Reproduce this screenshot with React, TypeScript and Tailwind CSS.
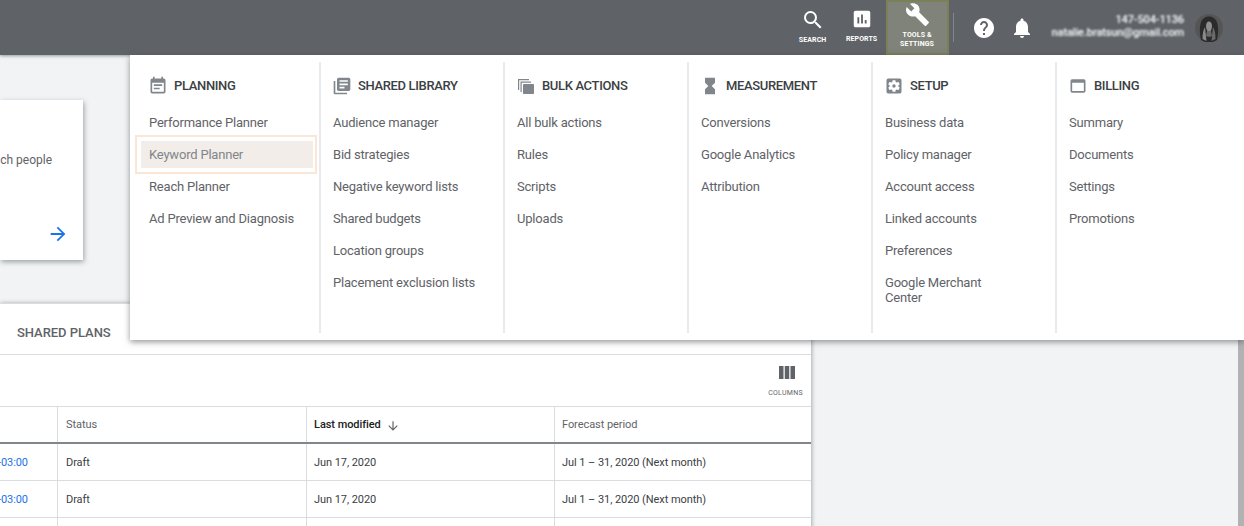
import React from "react";
import {
  MdSearch,
  MdAssessment,
  MdBuild,
  MdHelp,
  MdNotifications,
  MdEventNote,
  MdLibraryBooks,
  MdHourglassFull,
  MdSettingsApplications,
  MdWebAsset,
  MdArrowForward,
  MdArrowDownward,
} from "react-icons/md";

function BulkIcon() {
  return (
    <svg viewBox="0 0 18 18" className="w-[18px] h-[18px]" fill="#80868b">
      <path d="M1 2h11v1.2H2.2V13H1V2z" />
      <path d="M3.5 4.5H14v1.2H4.7V15H3.5V4.5z" />
      <rect x="6" y="7" width="11" height="10" rx="0.8" />
    </svg>
  );
}

const columns = [
  {
    title: "PLANNING",
    icon: <MdEventNote size={20} color="#80868b" />,
    items: ["Performance Planner", "Keyword Planner", "Reach Planner", "Ad Preview and Diagnosis"],
    w: "w-[191px]",
    pl: "pl-[19px]",
  },
  {
    title: "SHARED LIBRARY",
    icon: <MdLibraryBooks size={20} color="#80868b" />,
    items: ["Audience manager", "Bid strategies", "Negative keyword lists", "Shared budgets", "Location groups", "Placement exclusion lists"],
    w: "w-[184px]",
    pl: "pl-[12px]",
  },
  {
    title: "BULK ACTIONS",
    icon: <BulkIcon />,
    items: ["All bulk actions", "Rules", "Scripts", "Uploads"],
    w: "w-[184px]",
    pl: "pl-[12px]",
  },
  {
    title: "MEASUREMENT",
    icon: <MdHourglassFull size={20} color="#80868b" />,
    items: ["Conversions", "Google Analytics", "Attribution"],
    w: "w-[184px]",
    pl: "pl-[12px]",
  },
  {
    title: "SETUP",
    icon: <MdSettingsApplications size={20} color="#80868b" />,
    items: ["Business data", "Policy manager", "Account access", "Linked accounts", "Preferences", "Google Merchant Center"],
    w: "w-[184px]",
    pl: "pl-[12px]",
  },
  {
    title: "BILLING",
    icon: <MdWebAsset size={20} color="#80868b" />,
    items: ["Summary", "Documents", "Settings", "Promotions"],
    w: "flex-1",
    pl: "pl-[12px]",
  },
];

function Menu() {
  return (
    <div className="absolute left-[130px] right-0 top-[55px] h-[285px] bg-white shadow-[0_2px_6px_rgba(60,64,67,0.55)] flex pt-[7px] pb-[7px] text-[13px] leading-[16px] tracking-[-0.2px]">
      {columns.map((c, i) => (
        <div key={c.title} className={`${c.w} ${c.pl} ${i < 5 ? "border-r-2 border-[#e8eaed]" : ""} shrink-0`}>
          <div className="flex items-center gap-[6px] h-[32px] mt-[8px] -ml-[1px]">
            <span className="w-[20px] h-[20px] flex items-center justify-center">{c.icon}</span>
            <span className="font-medium text-[#3c4043] tracking-[-0.35px]">{c.title}</span>
          </div>
          <div className="mt-[5px]">
            {c.items.map((it) =>
              it === "Keyword Planner" ? (
                <div key={it} className="relative h-[32px]">
                  <div className="absolute left-[-14px] right-[2px] top-[-4px] h-[39px] border-2 border-[#fbe6d5] bg-white p-[4px] pr-[2px]">
                    <div className="h-full bg-[#f2ede9] pl-[8px] flex items-center text-[#80868b]">{it}</div>
                  </div>
                </div>
              ) : (
                <div key={it} className={`${it.startsWith("Google Merchant") ? "w-[110px] pt-[8px] leading-[15px]" : "h-[32px] flex items-center"} text-[#5f6368]`}>
                  {it}
                </div>
              )
            )}
          </div>
        </div>
      ))}
    </div>
  );
}

function NavButton({ icon, label, w, pt, mt }: { icon: React.ReactNode; label: string; w: string; pt: string; mt: string }) {
  return (
    <div className={`${w} ${pt} self-start flex flex-col items-center text-white`}>
      {icon}
      <span className={`text-[7px] leading-[9px] font-bold ${mt} tracking-[0.1px]`}>{label}</span>
    </div>
  );
}

function Header() {
  return (
    <div className="h-[55px] shrink-0 bg-[#5f6368] flex items-center justify-end pr-[21px] shadow-[0_1px_3px_rgba(60,64,67,0.5)] relative">
      <NavButton w="w-[42px]" pt="pt-[8px]" mt="mt-[4px]" label="SEARCH" icon={<MdSearch size={24} />} />
      <div className="w-[10px]" />
      <NavButton w="w-[36px]" pt="pt-[8px]" mt="mt-[5px]" label="REPORTS" icon={<MdAssessment size={22} />} />
      <div className="w-[6px]" />
      <div className="w-[63px] h-[55px] bg-[#7f8379] border-2 border-[#7b8058] flex flex-col items-center text-white overflow-hidden">
        <MdBuild size={25} />
        <span className="text-[7px] leading-[9px] font-bold mt-[4px] text-center tracking-[0.1px]">
          TOOLS &amp;<br />SETTINGS
        </span>
      </div>
      <div className="w-px h-[29px] bg-[#80868b] ml-[4px]" />
      <MdHelp size={24} color="#fff" className="ml-[18px]" />
      <MdNotifications size={24} color="#fff" className="ml-[14px]" />
      <div className="ml-[18px] -mt-[3px] text-right text-[11px] leading-[13px] font-medium text-white tracking-[-0.12px] blur-[0.8px]">
        <div>147-504-1136</div>
        <div>natalie.bratsun@gmail.com</div>
      </div>
      <svg viewBox="0 0 28 28" className="w-[28px] h-[28px] ml-[11px]">
        <circle cx="14" cy="14" r="14" fill="#555" />
        <path d="M6 26c-1.500-7-1.500-12-.5-16 1-5 4.500-7.500 8.500-7.500s7.500 2.500 8.500 7.500c1 4 1 9-.5 16l-4 2H10z" fill="#2b2b2b" />
        <path d="M11 12c0-2.500 1.300-4.500 3-4.500s3 2 3 4.500-1.300 6-3 6-3-3.500-3-6z" fill="#8f8f8f" />
        <path d="M12 17h4l1 5c-1 1-5 1-6 0z" fill="#6a6a6a" />
        <path d="M7.500 25c0-5 .7-9 2.500-12l1.500 14z" fill="#8a8a8a" />
        <path d="M20.500 25c0-5-.7-9-2.500-12l-1.500 14z" fill="#6a6a6a" />
      </svg>
    </div>
  );
}

const rowCell = "pl-[7px] flex items-center border-l border-[#dadce0]";

function Row({ empty }: { empty?: boolean }) {
  return (
    <div className={`grid grid-cols-[57px_249px_248px_1fr] h-[37px] shrink-0 whitespace-nowrap text-[11px] tracking-[-0.06px] text-[#3c4043] ${empty ? "" : "border-b border-[#dadce0]"}`}>
      <div className="flex items-center justify-end pr-[29px] pt-[2px] text-[#1a73e8]">{empty ? "" : "-03:00"}</div>
      <div className={`${rowCell} pl-[8px] pt-[2px]`}>{empty ? "" : "Draft"}</div>
      <div className={`${rowCell} pt-[2px]`}>{empty ? "" : "Jun 17, 2020"}</div>
      <div className={`${rowCell} pt-[2px]`}>{empty ? "" : "Jul 1 – 31, 2020 (Next month)"}</div>
    </div>
  );
}

export default function App() {
  return (
    <div className="relative w-[1244px] h-[526px] overflow-hidden bg-[#f1f3f4] flex flex-col font-['Roboto',sans-serif]">
      <Header />
      <div className="flex-1 flex flex-col min-h-0">
        <div className="w-[83px] h-[160px] shrink-0 mt-[45px] bg-white shadow-[1px_2px_5px_rgba(60,64,67,0.45)] flex flex-col items-end overflow-hidden whitespace-nowrap">
          <div className="mt-[52px] pr-[31px] text-[12px] leading-[16px] text-[#5f6368]">ch people</div>
          <MdArrowForward size={22} color="#1a73e8" className="mt-[55px] mr-[14px]" />
        </div>
        <div className="w-[811px] mt-[43px] flex-1 bg-white shadow-[1px_0_4px_rgba(60,64,67,0.4)] flex flex-col border-t border-[#dadce0]">
          <div className="h-[51px] shrink-0 border-b border-[#dadce0] pl-[17px] pt-[7px] flex items-center text-[13px] font-medium tracking-[-0.05px] text-[#5f6368]">
            SHARED PLANS
          </div>
          <div className="h-[51px] shrink-0 flex flex-col items-end pr-[8px] pt-[11px]">
            <div className="flex flex-col items-center text-[#5f6368]">
              <svg viewBox="0 0 16 13" className="w-[16px] h-[13px] ml-[2px]" fill="#5f6368">
                <rect x="0" y="0" width="4.500" height="13" />
                <rect x="5.750" y="0" width="4.500" height="13" />
                <rect x="11.500" y="0" width="4.500" height="13" />
              </svg>
              <span className="text-[7px] leading-[8px] mt-[10px] tracking-[0.3px]">COLUMNS</span>
            </div>
          </div>
          <div className="grid grid-cols-[57px_249px_248px_1fr] h-[38px] shrink-0 border-t border-[#dadce0] border-b-2 border-b-[#80868b] text-[11px] tracking-[-0.06px] text-[#5f6368]">
            <div />
            <div className={`${rowCell} pl-[8px] pt-[2px]`}>Status</div>
            <div className={`${rowCell} pt-[2px] font-medium text-[#202124]`}>
              Last modified
              <MdArrowDownward size={14} color="#5f6368" className="ml-[5px]" />
            </div>
            <div className={`${rowCell} pt-[2px]`}>Forecast period</div>
          </div>
          <Row />
          <Row />
          <Row empty />
        </div>
      </div>
      <div className="absolute right-0 top-[340px] bottom-0 w-[6px] bg-[#b1b2b4]" />
      <Menu />
    </div>
  );
}
